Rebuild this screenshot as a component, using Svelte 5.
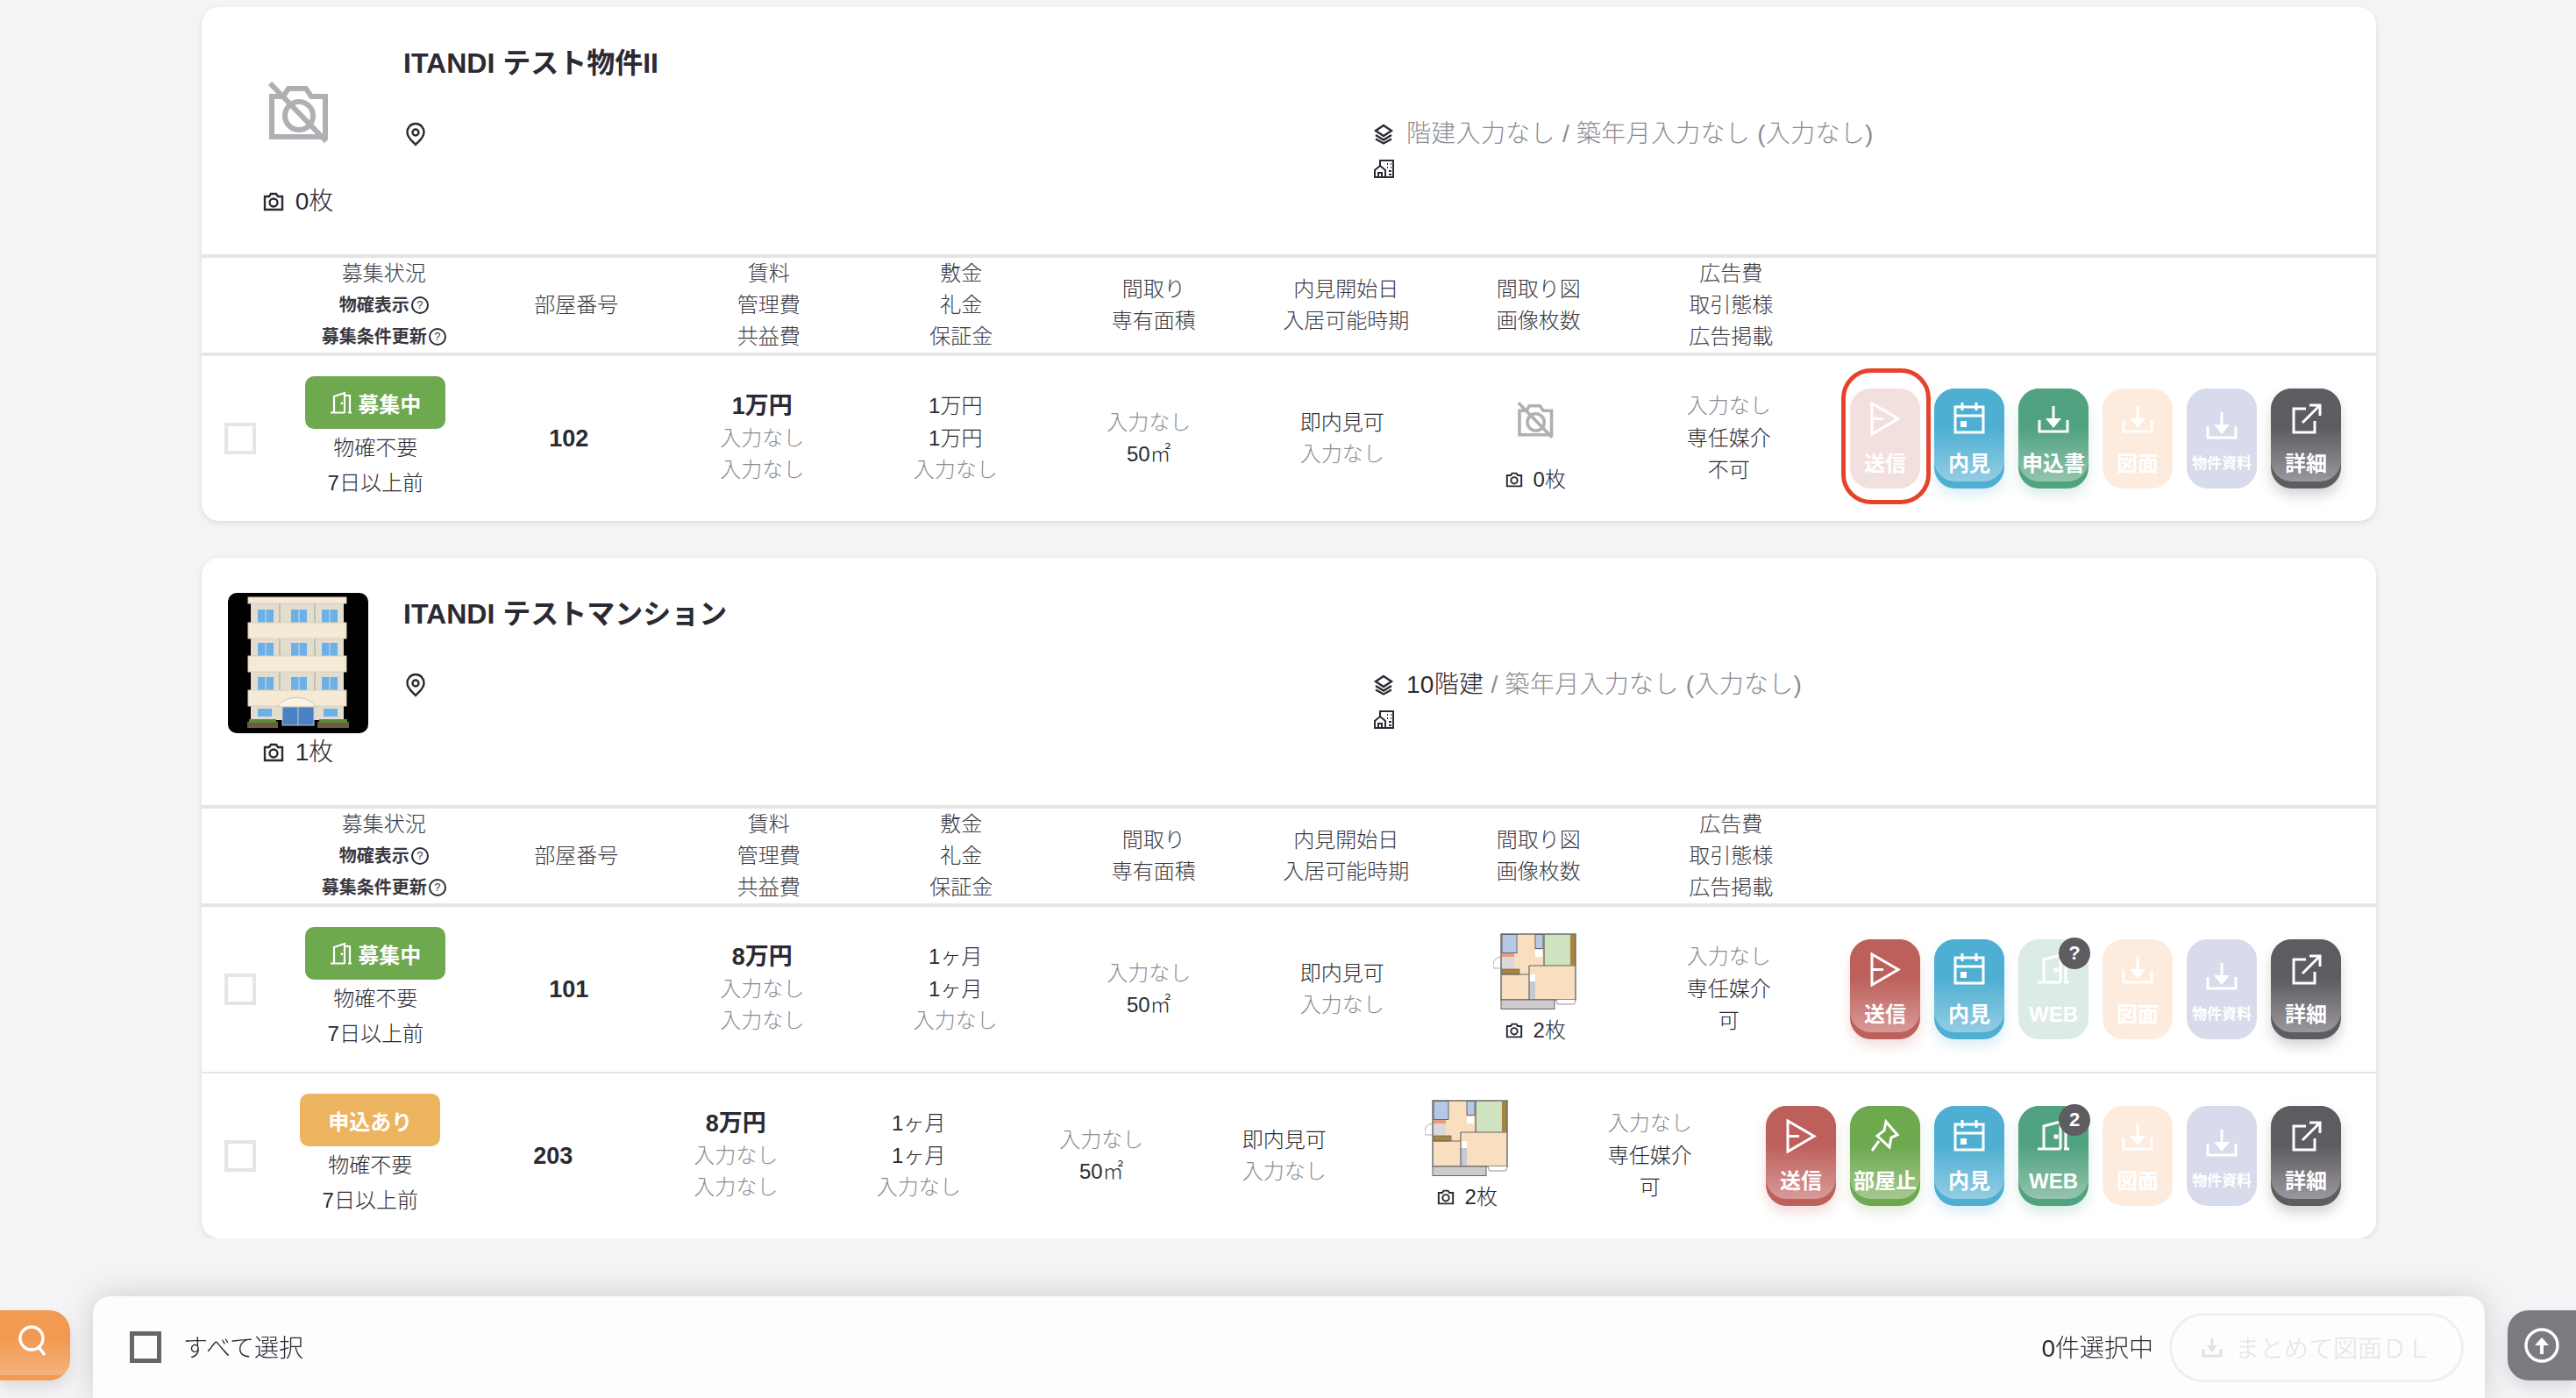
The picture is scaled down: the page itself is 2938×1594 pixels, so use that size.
<script>
  // one listing per building, rooms underneath
  const g = (t) => ({ t, c: "gray" });
  const d = (t) => ({ t, c: "dark" });
  const b = (t) => ({ t, c: "bold" });

  const send = { key: "send", icon: "send", label: "送信", tone: "red" };
  const sendOff = { key: "send", icon: "send", label: "送信", tone: "pale", ring: true };
  const stop = { key: "stop", icon: "pin", label: "部屋止", tone: "plant" };
  const visit = { key: "visit", icon: "calendar", label: "内見", tone: "blue" };
  const form = { key: "form", icon: "download", label: "申込書", tone: "green" };
  const plan = { key: "plan", icon: "download", label: "図面", tone: "peach" };
  const docs = { key: "docs", icon: "download", label: "物件資料", tone: "lav", small: true };
  const more = { key: "more", icon: "external", label: "詳細", tone: "dark" };

  const listings = [
    {
      name: "ITANDI テスト物件II",
      photo: false,
      photos: "0枚",
      floors: "階建入力なし",
      floorsGray: true,
      built: " / 築年月入力なし (入力なし)",
      rooms: [
        {
          status: "募集中",
          door: true,
          room: "102",
          rent: "1万円",
          deposit: ["1万円", "1万円"],
          hasPlan: false,
          planCount: "0枚",
          deal: "不可",
          actions: [sendOff, visit, form, plan, docs, more]
        }
      ]
    },
    {
      name: "ITANDI テストマンション",
      photo: true,
      photos: "1枚",
      floors: "10階建",
      floorsGray: false,
      built: " / 築年月入力なし (入力なし)",
      rooms: [
        {
          status: "募集中",
          door: true,
          room: "101",
          rent: "8万円",
          deposit: ["1ヶ月", "1ヶ月"],
          hasPlan: true,
          planCount: "2枚",
          deal: "可",
          actions: [
            send,
            visit,
            { key: "web", icon: "door", label: "WEB", tone: "mint", count: "?" },
            plan,
            docs,
            more
          ]
        },
        {
          status: "申込あり",
          door: false,
          room: "203",
          rent: "8万円",
          deposit: ["1ヶ月", "1ヶ月"],
          hasPlan: true,
          planCount: "2枚",
          deal: "可",
          actions: [
            send,
            stop,
            visit,
            { key: "web", icon: "door", label: "WEB", tone: "green", count: "2" },
            plan,
            docs,
            more
          ]
        }
      ]
    }
  ];

  const heads = [
    ["部屋番号"],
    ["賃料", "管理費", "共益費"],
    ["敷金", "礼金", "保証金"],
    ["間取り", "専有面積"],
    ["内見開始日", "入居可能時期"],
    ["間取り図", "画像枚数"],
    ["広告費", "取引態様", "広告掲載"]
  ];
</script>

{#snippet noPhoto(cls)}
  <svg class={cls} viewBox="0 0 70 70" fill="none" stroke="#b0b0b4" stroke-width="6">
    <path d="M5 63V17h13l6-9h20l6 9h16v46z" />
    <circle cx="36" cy="39" r="16" />
    <path d="M3 2l64 66" />
  </svg>
{/snippet}

{#snippet camera()}
  <svg class="cam" viewBox="0 0 24 22" fill="none" stroke="#2b2a33" stroke-width="2.4">
    <path d="M2 20V5h5l2-3h6l2 3h5v15z" />
    <circle cx="12" cy="12" r="4.5" />
  </svg>
{/snippet}

{#snippet icon(name)}
  <svg class="ico" viewBox="0 0 40 40" fill="none" stroke="#fff" stroke-width="3">
    {#if name === "send"}
      <path d="M5 3l30 17.500L5 38z" />
      <path d="M5 20.500h13" />
    {:else if name === "calendar"}
      <path d="M4 7h32v29H4z" />
      <path d="M4 17h32M12 2v9M28 2v9" />
      <path d="M10 23h7v7h-7z" fill="#fff" stroke="none" />
    {:else if name === "download"}
      <path d="M4 22v13h32V22" />
      <path d="M20 6v18" />
      <path d="M11 20h18l-9 11z" fill="#fff" stroke="none" />
    {:else if name === "external"}
      <path d="M20 9H6v27h24V23" />
      <path d="M16 25L35 6M24 5h12v12" />
    {:else if name === "door"}
      <path d="M2 35h26M32 35h6M9 35V9l19-5v31M28 9h6v26" />
      <path d="M22 20h2v2h-2z" fill="#fff" />
    {:else if name === "pin"}
      <path d="M21 4l13 15-7 3-2 11-14-13 8-6z" />
      <path d="M13 26L5 37" />
    {/if}
  </svg>
{/snippet}

{#snippet action(a)}
  <div class="btn {a.tone}" class:small={a.small}>
    <div class="face">
      {@render icon(a.icon)}
      <span class="label">{a.label}</span>
    </div>
    {#if a.count}<span class="count">{a.count}</span>{/if}
    {#if a.ring}<span class="ring"></span>{/if}
  </div>
{/snippet}

{#snippet building()}
  <svg class="thumb" viewBox="0 0 160 160">
    <rect width="160" height="160" rx="10" fill="#000" />
    <rect x="26" y="10" width="106" height="135" fill="#e3ddd0" />
    <rect x="23" y="5" width="112" height="7" fill="#f5ead6" stroke="#d8cdb8" />
    <path d="M59 12v22M99 12v22M59 52v20M99 52v20M59 90v21M99 90v21" stroke="#c6bdae" stroke-width="2" />
    {#each [19, 57, 96] as y}
      {#each [34, 72, 107] as x}
        <rect {x} {y} width="18" height="15" fill="#6cb0e6" />
        <path d="M{x + 9} {y}v15" stroke="#c8dff0" />
      {/each}
    {/each}
    {#each [34, 72, 111] as y}
      <rect x="23" {y} width="112" height="18" fill="#f5ead6" stroke="#dccfb8" />
    {/each}
    <rect x="34" y="132" width="16" height="9" fill="#6cb0e6" />
    <rect x="109" y="132" width="16" height="9" fill="#6cb0e6" />
    <path d="M57 130c6-14 37-14 43 0z" fill="#faf3e6" stroke="#cfc3ae" />
    <rect x="62" y="130" width="36" height="21" fill="#4a80c4" stroke="#d5cbb8" />
    <path d="M80 130v21" stroke="#d5cbb8" />
    <rect x="22" y="147" width="35" height="7" fill="#6b5a45" />
    <rect x="24" y="144" width="31" height="4" fill="#5d8c3a" />
    <rect x="102" y="147" width="36" height="7" fill="#6b5a45" />
    <rect x="104" y="144" width="32" height="4" fill="#5d8c3a" />
  </svg>
{/snippet}

{#snippet floorplan()}
  <svg class="plan" viewBox="0 0 96 87">
    <path d="M9 27a9 9 0 0 0 -9 9v4h9" fill="#fff" stroke="#777" stroke-width=".6" />
    <rect x="9" y="1" width="85" height="75" fill="#f9dfc0" />
    <rect x="10" y="1.500" width="17" height="21" fill="#b6c8e6" stroke="#666" />
    <rect x="48" y="1.500" width="9" height="16" fill="#b6c8e6" stroke="#666" />
    <rect x="58" y="1.500" width="30" height="35" fill="#cfe3c0" stroke="#b9cfa9" stroke-width=".6" />
    <rect x="88" y="1.500" width="6" height="35" fill="#a8853f" />
    <rect x="10" y="23" width="14" height="4" fill="#ee9a78" />
    <rect x="10" y="27" width="14" height="13" fill="#d9d9d9" />
    <rect x="10" y="41" width="20" height="6" fill="#a8853f" stroke="#666" stroke-width=".8" />
    <rect x="48" y="19" width="8" height="8" fill="#fff" />
    <rect x="41" y="47" width="7" height="28" fill="#c3cbd6" />
    <rect x="41" y="47" width="7" height="8" fill="#fff" />
    <path d="M41 37h53M41 37v39M10 47h31M58 1v36" fill="none" stroke="#666" stroke-width="1.200" />
    <rect x="9" y="1" width="85" height="75" fill="none" stroke="#666" stroke-width="1.400" />
    <rect x="9" y="76" width="61" height="10.500" fill="#cccccc" stroke="#666" />
    <path d="M72 76l1.500 5h19l1.500-5" fill="#fff" stroke="#777" stroke-width=".8" />
  </svg>
{/snippet}

<main class="page">
  {#each listings as item}
    <section class="card">
      <header class="head">
        <div class="media">
          <div class="pic">
            {#if item.photo}
              {@render building()}
            {:else}
              {@render noPhoto("noPhotoBig")}
            {/if}
          </div>
          <div class="count-line big">{@render camera()}<span>{item.photos}</span></div>
        </div>
        <div class="info">
          <h2>{item.name}</h2>
          <div class="meta">
            <div class="addr">
              <svg class="pinmark" viewBox="0 0 24 28" fill="none" stroke="#2b2a33" stroke-width="2.400">
                <path d="M12 2C6.500 2 2.500 6.500 2.500 12c0 6 5.500 9.500 9.500 14 4-4.500 9.500-8 9.500-14C21.500 6.500 17.500 2 12 2z" />
                <circle cx="12" cy="12" r="3.500" />
              </svg>
            </div>
            <div class="spec">
              <div class="spec-line">
                <svg class="layers" viewBox="0 0 24 24" fill="none" stroke="#2b2a33" stroke-width="2.400">
                  <path d="M12 2l9 6-9 6-9-6z" />
                  <path d="M3 13l9 5.500 9-5.500M3 17.500l9 5 9-5" />
                </svg>
                <span class:gray={item.floorsGray}>{item.floors}</span><span class="gray">{item.built}</span>
              </div>
              <svg class="house" viewBox="0 0 24 22" fill="none" stroke="#2b2a33" stroke-width="2">
                <path d="M8 8V2h15v19H2v-8l6-5 6 5v8" />
                <path d="M6 21v-5h4v5M16 6h1M20 6h1M16 10h1M20 10h1M18 14h3M18 18h3" />
              </svg>
            </div>
          </div>
        </div>
      </header>

      <div class="thead">
        <div class="th">
          <span>募集状況</span>
          <span class="th-small">物確表示<i class="help">?</i></span>
          <span class="th-small">募集条件更新<i class="help">?</i></span>
        </div>
        {#each heads as lines}
          <div class="th">
            {#each lines as line}<span>{line}</span>{/each}
          </div>
        {/each}
      </div>

      {#each item.rooms as room}
        <div class="row">
          <span class="check"></span>
          <div class="cols">
            <div class="cell">
              <span class="status" class:wait={!room.door}>
                {#if room.door}
                  <svg class="door" viewBox="0 0 26 26" fill="none" stroke="#fff" stroke-width="2.200">
                    <path d="M1 24.500h16M21 24.500h4M5 25V6l12-4v23M17 5h6v20" />
                    <path d="M13 13h1.500v1.500H13z" fill="#fff" stroke-width="1" />
                  </svg>
                {/if}
                {room.status}
              </span>
              <span class="sub">物確不要</span>
              <span class="sub">7日以上前</span>
            </div>
            <div class="cell room-no">{room.room}</div>
            {@render lines([b(room.rent), g("入力なし"), g("入力なし")])}
            {@render lines([d(room.deposit[0]), d(room.deposit[1]), g("入力なし")])}
            {@render lines([g("入力なし"), d("50㎡")])}
            {@render lines([d("即内見可"), g("入力なし")])}
            <div class="cell">
              <div class="plan-box">
                {#if room.hasPlan}
                  {@render floorplan()}
                {:else}
                  {@render noPhoto("noPhotoSmall")}
                {/if}
              </div>
              <div class="count-line">{@render camera()}<span>{room.planCount}</span></div>
            </div>
            {@render lines([g("入力なし"), d("専任媒介"), d(room.deal)])}
          </div>
          <div class="actions">
            {#each room.actions as a (a.key)}
              {@render action(a)}
            {/each}
          </div>
        </div>
      {/each}
    </section>
  {/each}
</main>

{#snippet lines(list)}
  <div class="cell stack">
    {#each list as l}
      <span class={l.c}>{l.t}</span>
    {/each}
  </div>
{/snippet}

<div class="side search">
  <svg viewBox="0 0 36 36" fill="none" stroke="#fff" stroke-width="3.400">
    <circle cx="16" cy="15" r="13" />
    <path d="M25 26l6 8" />
  </svg>
</div>

<footer class="bar">
  <span class="check strong"></span>
  <span class="all">すべて選択</span>
  <span class="picked">0件選択中</span>
  <div class="bulk">
    <svg viewBox="0 0 24 24" fill="none" stroke="#e2e2e2" stroke-width="3">
      <path d="M2 14v8h20v-8" />
      <path d="M12 2v10" />
      <path d="M6 10h12l-6 8z" fill="#e2e2e2" stroke="none" />
    </svg>
    まとめて図面ＤＬ
  </div>
</footer>

<div class="side top">
  <svg viewBox="0 0 40 40" fill="none" stroke="#fff" stroke-width="3.400">
    <circle cx="20" cy="20" r="18" />
    <path d="M20 30V19" stroke-width="4" />
    <path d="M12 20h16l-8-9z" fill="#fff" stroke="none" />
  </svg>
</div>

<style>
  :global(body) {
    margin: 0;
    background: #f4f4f7;
    overflow: hidden;
  }

  .page {
    width: 2480px;
    margin-left: 230px;
    padding-top: 8px;
    display: flex;
    flex-direction: column;
    gap: 42px;
    color: #2b2a33;
    font-family: "Liberation Sans", "Noto Sans CJK JP", sans-serif;
    font-size: 24px;
    font-weight: 300;
  }

  .card {
    background: #fff;
    border-radius: 20px;
    overflow: hidden;
    box-shadow: 0 2px 6px rgba(0, 0, 0, 0.1);
  }

  .head {
    height: 282px;
    display: flex;
    padding-left: 30px;
    box-sizing: border-box;
  }

  .media {
    width: 160px;
    padding-top: 40px;
    display: flex;
    flex-direction: column;
    align-items: center;
  }

  .pic {
    width: 160px;
    height: 160px;
    display: flex;
    align-items: center;
    justify-content: center;
  }

  .thumb {
    width: 160px;
    height: 160px;
  }

  .noPhotoBig {
    width: 70px;
    height: 70px;
  }

  .noPhotoSmall {
    width: 42px;
    height: 42px;
  }

  .count-line {
    display: flex;
    align-items: center;
    justify-content: center;
    gap: 12px;
    line-height: 36px;
    margin-top: 6px;
  }

  .count-line .cam {
    width: 20px;
    height: 18px;
  }

  .count-line.big {
    font-size: 28px;
    gap: 13px;
    margin-top: 4px;
  }

  .big .cam {
    width: 24px;
    height: 22px;
  }

  .info {
    margin-left: 40px;
    flex: 1;
  }

  h2 {
    margin: 44px 0 0;
    font-size: 32px;
    line-height: 40px;
    font-weight: 700;
  }

  .meta {
    display: flex;
    margin-top: 43px;
  }

  .addr {
    width: 1106px;
    height: 36px;
    display: flex;
    align-items: center;
  }

  .pinmark {
    width: 24px;
    height: 28px;
    margin-left: 2px;
  }

  .spec-line {
    font-size: 28px;
    line-height: 36px;
    display: flex;
    align-items: center;
    white-space: pre;
    letter-spacing: 0.3px;
  }

  .layers {
    width: 24px;
    height: 24px;
    margin-right: 14px;
  }

  .house {
    display: block;
    width: 24px;
    height: 22px;
    margin-top: 10px;
  }

  .gray {
    color: #8c8c93;
  }

  .thead {
    border-top: 4px solid #e5e5e5;
    border-bottom: 4px solid #e5e5e5;
    height: 108px;
    display: grid;
    grid-template-columns: repeat(8, 219.500px);
    padding-left: 98px;
    line-height: 36px;
    color: #3a3942;
  }

  .th {
    display: flex;
    flex-direction: column;
    align-items: center;
    justify-content: center;
    white-space: nowrap;
  }

  .th-small {
    font-size: 20px;
    font-weight: 700;
    display: flex;
    align-items: center;
  }

  .help {
    width: 16px;
    height: 16px;
    margin-left: 2px;
    border: 2px solid #2b2a33;
    border-radius: 50%;
    font-style: normal;
    font-size: 13px;
    font-weight: 400;
    line-height: 16px;
    text-align: center;
  }

  .row {
    height: 188px;
    display: flex;
    align-items: center;
    padding: 0 40px 0 26px;
  }

  .row + .row {
    border-top: 2px solid #e5e5e5;
  }

  .check {
    width: 36px;
    height: 36px;
    flex: none;
    box-sizing: border-box;
    border: 4px solid #e5e5e5;
  }

  .cols {
    flex: 1;
    display: grid;
    grid-template-columns: repeat(8, 1fr);
    margin: 0 28px 0 26px;
  }

  .cell {
    display: flex;
    flex-direction: column;
    align-items: center;
    justify-content: center;
    white-space: nowrap;
  }

  .stack {
    line-height: 36.500px;
  }

  .status {
    width: 160px;
    height: 60px;
    border-radius: 10px;
    background: #6ea84f;
    color: #fff;
    font-weight: 700;
    display: flex;
    align-items: center;
    justify-content: center;
    gap: 6px;
    margin-bottom: 2px;
  }

  .status.wait {
    background: #ecb45f;
  }

  .door {
    width: 26px;
    height: 26px;
  }

  .sub {
    line-height: 40px;
  }

  .room-no {
    font-size: 27px;
    font-weight: 700;
  }

  .bold {
    font-size: 27px;
    font-weight: 700;
  }

  .plan-box {
    width: 96px;
    height: 87px;
    display: flex;
    align-items: center;
    justify-content: center;
  }

  .plan {
    width: 96px;
    height: 87px;
  }

  .actions {
    display: flex;
    gap: 16px;
  }

  .btn {
    position: relative;
    width: 80px;
    height: 114px;
    flex: none;
    border-radius: 24px;
    background: var(--base);
    box-shadow: 0 8px 14px var(--glow);
  }

  .face {
    height: 106px;
    border-radius: 24px;
    background: linear-gradient(var(--base) 42%, var(--tip));
    display: flex;
    flex-direction: column;
    align-items: center;
    padding-top: 14px;
    box-sizing: border-box;
  }

  .ico {
    width: 40px;
    height: 40px;
    margin-bottom: 16px;
    flex: none;
  }

  .small .ico {
    margin-top: 7px;
    margin-bottom: 9px;
  }

  .label {
    color: #fff;
    font-size: 24px;
    font-weight: 700;
    line-height: 32px;
    white-space: nowrap;
  }

  .small .label {
    font-size: 17px;
  }

  .count {
    position: absolute;
    top: -2px;
    right: -2px;
    width: 36px;
    height: 36px;
    border-radius: 50%;
    background: #5e5b61;
    color: #fff;
    font-size: 22px;
    font-weight: 700;
    line-height: 36px;
    text-align: center;
  }

  .ring {
    position: absolute;
    inset: -23px -12px -18px -10px;
    border: 5px solid #e8432a;
    border-radius: 34px;
  }

  .red {
    --base: #bd605c;
    --tip: #d89a98;
    --glow: rgba(189, 96, 92, 0.2);
  }

  .blue {
    --base: #4eafd2;
    --tip: #93cde3;
    --glow: rgba(78, 175, 210, 0.2);
  }

  .green {
    --base: #50a280;
    --tip: #94c4ae;
    --glow: rgba(80, 162, 128, 0.2);
  }

  .plant {
    --base: #6ea84f;
    --tip: #a5c88f;
    --glow: rgba(110, 168, 79, 0.2);
  }

  .dark {
    --base: #5e5b61;
    --tip: #9a989c;
    --glow: rgba(94, 91, 97, 0.25);
  }

  .pale {
    --base: #f2e0df;
    --tip: #f2e0df;
    --glow: transparent;
  }

  .mint {
    --base: #dcece5;
    --tip: #dcece5;
    --glow: transparent;
  }

  .peach {
    --base: #fdebde;
    --tip: #fdebde;
    --glow: transparent;
  }

  .lav {
    --base: #d8dbeb;
    --tip: #d8dbeb;
    --glow: transparent;
  }

  .bar {
    position: fixed;
    left: 106px;
    right: 104px;
    bottom: 0;
    height: 116px;
    padding: 0 24px 0 42px;
    box-sizing: border-box;
    display: flex;
    align-items: center;
    background: #fdfdfd;
    border-radius: 20px 20px 0 0;
    box-shadow: 0 0 36px rgba(0, 0, 0, 0.16);
    color: #2b2a33;
    font-family: "Liberation Sans", "Noto Sans CJK JP", sans-serif;
    font-size: 28px;
    font-weight: 300;
  }

  .check.strong {
    border: 5px solid #666;
  }

  .all {
    margin: 0 0 3px 25px;
  }

  .picked {
    margin: 0 0 3px auto;
  }

  .bulk {
    width: 336px;
    height: 79px;
    margin-left: 18px;
    box-sizing: border-box;
    border: 3px solid #efefef;
    border-radius: 40px;
    color: #e2e2e2;
    display: flex;
    align-items: center;
    justify-content: center;
    gap: 14px;
  }

  .bulk svg {
    width: 24px;
    height: 24px;
  }

  .side {
    position: fixed;
    bottom: 20px;
    height: 80px;
    display: flex;
    align-items: center;
    justify-content: center;
    box-shadow: 0 8px 16px rgba(0, 0, 0, 0.1);
    box-sizing: border-box;
  }

  .search {
    left: 0;
    width: 80px;
    border-radius: 0 24px 24px 0;
    background: #f39a52;
    background-image: linear-gradient(#f39a52 40%, #f4b27b 92%, #f39a52 92%);
    padding: 0 4px 10px 0;
  }

  .search svg {
    width: 36px;
    height: 36px;
  }

  .top {
    right: 0;
    width: 78px;
    border-radius: 24px 0 0 24px;
    background: #7c7a80;
  }

  .top svg {
    width: 40px;
    height: 40px;
  }
</style>
